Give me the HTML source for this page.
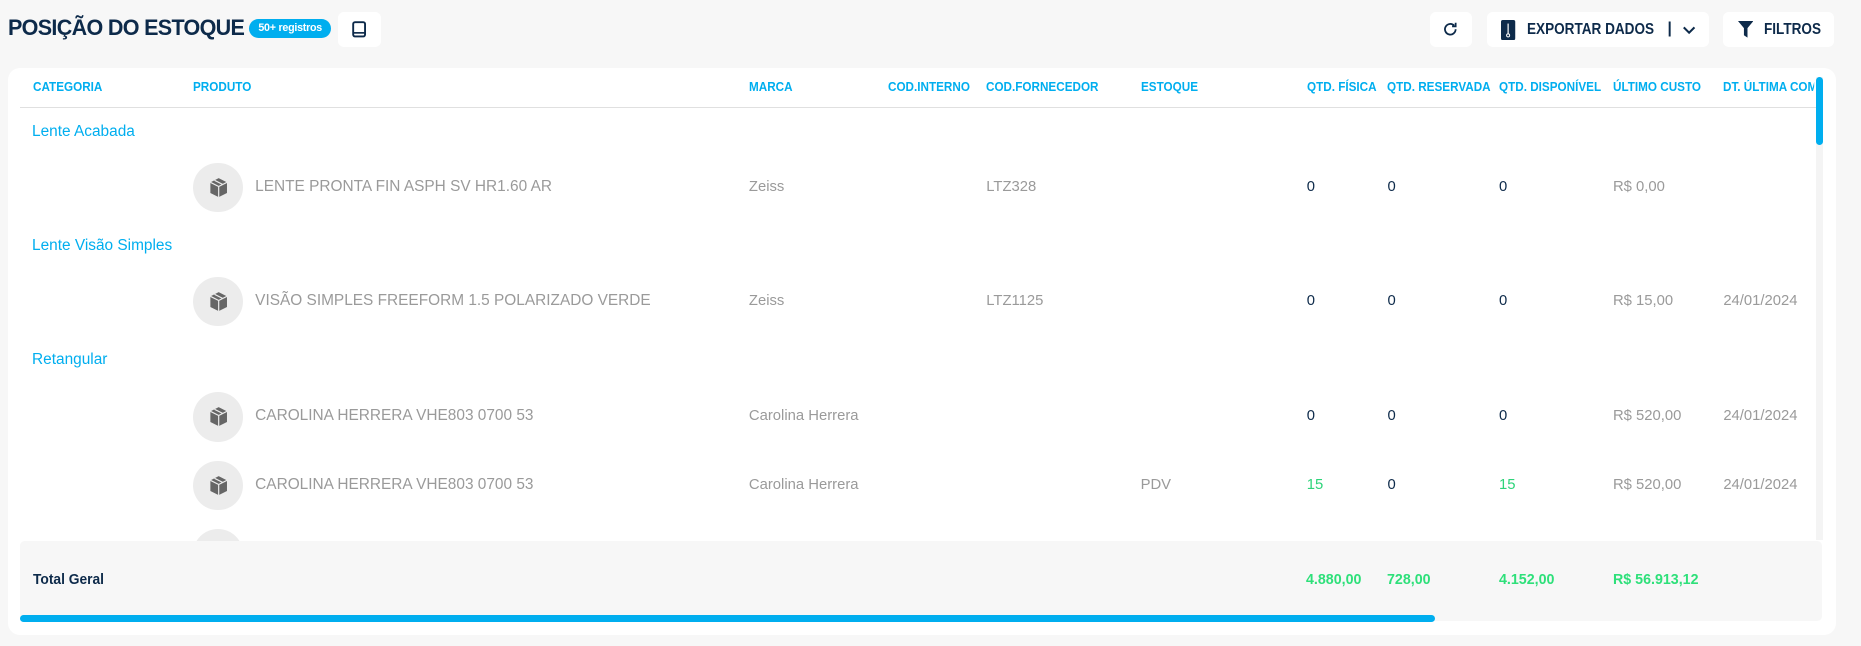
<!DOCTYPE html>
<html><head><meta charset="utf-8"><style>
html,body{margin:0;padding:0;background:#f7f7f7;overflow:hidden}
#w{zoom:1.18686;width:1568px;height:544px;position:relative;font-family:"Liberation Sans",Arial,sans-serif}
.a{position:absolute;white-space:nowrap}
.title{left:7px;top:13px;font-size:19px;font-weight:bold;color:#0d2a4a;letter-spacing:-0.6px;transform:scaleX(0.955);transform-origin:0 0}
.badge{left:210px;top:16px;width:69px;height:16px;border-radius:8px;background:#00aeef;color:#fff;font-size:9px;font-weight:bold;text-align:center;line-height:16px;letter-spacing:-0.2px}
.btn{background:#fff;border-radius:5px;height:30px;top:10px}
.card{left:7px;top:57px;width:1540px;height:478px;background:#fff;border-radius:10px}
.h{top:67px;font-size:10.5px;font-weight:bold;color:#00aeef;transform:scaleX(0.94);transform-origin:0 0}
.cat{font-size:13px;color:#00aeef}
.circ{left:163px;width:42px;height:42px;border-radius:50%;background:#ececec}
.p{left:215px;font-size:13px;color:#9a9a9a}
.g{font-size:12.5px;color:#9a9a9a}
.n{font-size:12.5px;color:#0d2a4a}
.gr{font-size:12.5px;color:#2ed47a}
.t{font-size:12.5px;font-weight:bold;color:#2ee07a;transform:scaleX(0.96);transform-origin:0 0}
</style></head><body><div id="w">
<div class="a title">POSIÇÃO DO ESTOQUE</div>
<div class="a badge">50+ registros</div>
<div class="a btn" style="left:285px;width:36px"><svg class="a" style="left:12px;top:8px" width="12" height="14" viewBox="0 0 12 14"><rect x="1" y="1" width="10" height="12" rx="1.5" fill="none" stroke="#0d2a4a" stroke-width="1.6"/><line x1="1" y1="10" x2="11" y2="10" stroke="#0d2a4a" stroke-width="1.4"/></svg></div>
<div class="a btn" style="left:1205px;width:35px"><svg class="a" style="left:10px;top:8px" width="14" height="14" viewBox="0 0 14 14"><path d="M11.5 7a4.5 4.5 0 1 1-1.3-3.2" fill="none" stroke="#0d2a4a" stroke-width="1.5"/><path d="M11.5 1.5v3h-3" fill="none" stroke="#0d2a4a" stroke-width="1.5"/></svg></div>
<div class="a btn" style="left:1253px;width:187px"><svg class="a" style="left:12px;top:7px" width="12" height="17" viewBox="0 0 12 17"><rect x="0" y="0" width="12" height="17" rx="1.5" fill="#0d2a4a"/><line x1="6" y1="3" x2="6" y2="12" stroke="#fff" stroke-width="1"/><circle cx="6" cy="13" r="1.3" fill="none" stroke="#fff" stroke-width=".8"/></svg><span class="a" style="left:34px;top:8px;font-size:13px;font-weight:bold;color:#0d2a4a;transform:scaleX(0.88);transform-origin:0 0">EXPORTAR DADOS</span><span class="a" style="left:152px;top:7px;font-size:13px;font-weight:bold;color:#0d2a4a">|</span><svg class="a" style="left:164px;top:11px" width="12" height="9" viewBox="0 0 12 9"><path d="M1.5 2l4.5 4.5L10.5 2" fill="none" stroke="#0d2a4a" stroke-width="1.7"/></svg></div>
<div class="a btn" style="left:1452px;width:93px"><svg class="a" style="left:12px;top:8px" width="13" height="14" viewBox="0 0 13 14"><path d="M0 0h13L8 6v8L5 12V6z" fill="#0d2a4a"/></svg><span class="a" style="left:34px;top:8px;font-size:13px;font-weight:bold;color:#0d2a4a;transform:scaleX(0.88);transform-origin:0 0">FILTROS</span></div>
<div class="a card"></div>
<div class="a h" style="left:28px">CATEGORIA</div><div class="a h" style="left:163px">PRODUTO</div><div class="a h" style="left:631px">MARCA</div><div class="a h" style="left:748px">COD.INTERNO</div><div class="a h" style="left:831px">COD.FORNECEDOR</div><div class="a h" style="left:961px">ESTOQUE</div><div class="a h" style="left:1101px">QTD. FÍSICA</div><div class="a h" style="left:1169px">QTD. RESERVADA</div><div class="a h" style="left:1263px">QTD. DISPONÍVEL</div><div class="a h" style="left:1359px">ÚLTIMO CUSTO</div><div class="a h" style="left:1452px;width:82px;overflow:hidden">DT. ÚLTIMA COMPRA</div>
<div class="a" style="left:17px;top:90px;width:1513px;height:1px;background:#e0e0e0"></div>
<div class="a" style="left:1530px;top:65px;width:6px;height:390px;background:#f4f4f4"></div>
<div class="a" style="left:1530px;top:65px;width:6px;height:57px;border-radius:3px;background:#00aeef"></div>
<div class="a cat" style="left:27px;top:104px">Lente Acabada</div>
<div class="a cat" style="left:27px;top:200px">Lente Visão Simples</div>
<div class="a cat" style="left:27px;top:296px">Retangular</div>
<div id="rows"></div>
<div class="a" style="left:17px;top:456px;width:1518px;height:67px;background:#f7f7f7;border-radius:4px"></div>
<div class="a" style="left:28px;top:482px;font-size:12.5px;font-weight:bold;color:#0d2a4a;transform:scaleX(0.93);transform-origin:0 0">Total Geral</div>
<div class="a t" style="left:1100px;top:482px">4.880,00</div><div class="a t" style="left:1169px;top:482px">728,00</div><div class="a t" style="left:1263px;top:482px">4.152,00</div><div class="a t" style="left:1359px;top:482px">R$ 56.913,12</div>
<div class="a" style="left:17px;top:518px;width:1192px;height:6px;border-radius:3px;background:#00aeef"></div>
<script>
var rows=[[158,"LENTE PRONTA FIN ASPH SV HR1.60 AR","Zeiss","LTZ328","","0","0","0","R$ 0,00",""],
[254,"VISÃO SIMPLES FREEFORM 1.5 POLARIZADO VERDE","Zeiss","LTZ1125","","0","0","0","R$ 15,00","24/01/2024"],
[351,"CAROLINA HERRERA VHE803 0700 53","Carolina Herrera","","","0","0","0","R$ 520,00","24/01/2024"],
[409,"CAROLINA HERRERA VHE803 0700 53","Carolina Herrera","","PDV","15","0","15","R$ 520,00","24/01/2024"]];
var box='<svg class="a" style="left:12px;top:12px" width="18" height="18" viewBox="0 0 18 18"><path d="M9 1l7 3.5v9L9 17 2 13.5v-9z" fill="#666"/><path d="M2 4.5L9 8l7-3.5M9 8v9M5.5 2.8l7 3.5" fill="none" stroke="#ececec" stroke-width="1"/></svg>';
var h='';rows.forEach(function(r){var y=r[0],t=y-7;
h+='<div class="a circ" style="top:'+(y-21)+'px">'+box+'</div><div class="a p" style="top:'+(y-8)+'px">'+r[1]+'</div><div class="a g" style="left:631px;top:'+t+'px">'+r[2]+'</div><div class="a g" style="left:831px;top:'+t+'px">'+r[3]+'</div><div class="a g" style="left:961px;top:'+t+'px">'+r[4]+'</div>';
h+='<div class="a '+(r[5]=="0"?"n":"gr")+'" style="left:1101px;top:'+t+'px">'+r[5]+'</div><div class="a n" style="left:1169px;top:'+t+'px">'+r[6]+'</div><div class="a '+(r[7]=="0"?"n":"gr")+'" style="left:1263px;top:'+t+'px">'+r[7]+'</div><div class="a g" style="left:1359px;top:'+t+'px">'+r[8]+'</div><div class="a g" style="left:1452px;top:'+t+'px">'+r[9]+'</div>';});
h+='<div class="a circ" style="top:446px"></div>';
document.getElementById('rows').innerHTML=h;
</script>
</div></body></html>
